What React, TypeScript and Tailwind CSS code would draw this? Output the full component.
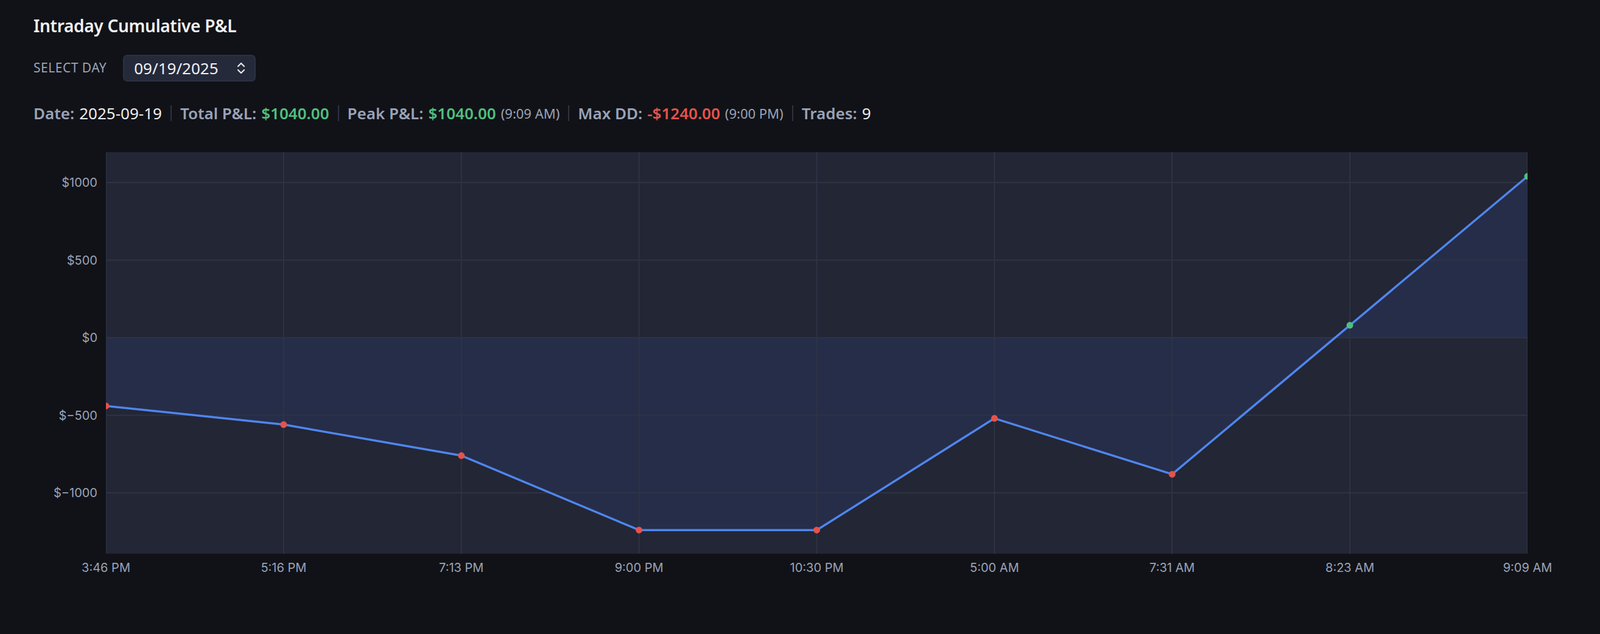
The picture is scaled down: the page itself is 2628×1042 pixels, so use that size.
const pts = [
  { t: "3:46 PM", v: -440 },
  { t: "5:16 PM", v: -560 },
  { t: "7:13 PM", v: -760 },
  { t: "9:00 PM", v: -1240 },
  { t: "10:30 PM", v: -1240 },
  { t: "5:00 AM", v: -520 },
  { t: "7:31 AM", v: -880 },
  { t: "8:23 AM", v: 80 },
  { t: "9:09 AM", v: 1040 },
];

// svg coordinates: svg top sits at page y=220
const L = 174;
const R = 2509;
const T = 30;
const B = 690;
const zeroY = 335;
const perUnit = 127.5 / 500;
const X = (i: number) => L + ((R - L) * i) / (pts.length - 1);
const Y = (v: number) => zeroY - v * perUnit;

function Chart() {
  const line = pts.map((p, i) => `${i ? "L" : "M"}${X(i)},${Y(p.v)}`).join(" ");
  const area = `${line} L${X(pts.length - 1)},${zeroY} L${X(0)},${zeroY} Z`;
  const ticks = [1000, 500, 0, -500, -1000];
  return (
    <svg width={2628} height={730} className="block">
      <defs>
        <clipPath id="plot">
          <rect x={L} y={T} width={R - L} height={B - T} />
        </clipPath>
      </defs>
      <rect x={L} y={T} width={R - L} height={B - T} fill="#232634" />
      <g clipPath="url(#plot)">
        <path d={area} fill="#283050" opacity={0.75} />
        {ticks.map((v) => (
          <line key={v} x1={L} x2={R} y1={Y(v)} y2={Y(v)} stroke="#2f3345" strokeWidth={2} />
        ))}
        {pts.map((_, i) => (
          <line key={i} x1={X(i)} x2={X(i)} y1={T} y2={B} stroke="#2f3345" strokeWidth={2} />
        ))}
        <path d={line} fill="none" stroke="#4f86ee" strokeWidth={3.5} strokeLinejoin="round" />
        {pts.map((p, i) => (
          <circle key={i} cx={X(i)} cy={Y(p.v)} r={5.5} fill={p.v >= 0 ? "#4fbf7f" : "#e5534b"} />
        ))}
      </g>
      {ticks.map((v) => (
        <text key={v} x={L - 14} y={Y(v) + 7} textAnchor="end" fontSize={20} fill="#9aa3b8" fontFamily="Inter, sans-serif">
          {v < 0 ? `$−${-v}` : `$${v}`}
        </text>
      ))}
      {pts.map((p, i) => (
        <text key={i} x={X(i)} y={B + 30} textAnchor="middle" fontSize={20} fill="#9aa3b8" fontFamily="Inter, sans-serif">
          {p.t}
        </text>
      ))}
    </svg>
  );
}

function Sep() {
  return <span className="mx-[14px] inline-block h-[26px] w-[2px] bg-[#2e3240] align-middle" />;
}

export default function App() {
  return (
    <div className="min-h-[1042px] w-[2628px] bg-[#111217] font-['Inter',sans-serif] text-[#e8e8ea]">
      <div className="px-[55px] pt-[26px]">
        <h1 className="text-[28px] leading-[32px] font-semibold tracking-[-0.3px] text-[#f2f2f4]">Intraday Cumulative P&amp;L</h1>
        <div className="mt-[32px] flex h-[44px] items-center gap-[27px]">
          <span className="text-[21px] tracking-[0.5px] text-[#9aa3b8]">SELECT DAY</span>
          <div className="flex h-[44px] w-[218px] items-center justify-between rounded-[7px] border-2 border-[#2c3142] bg-[#252a3a] pl-[16px] pr-[14px]">
            <span className="text-[26px] text-[#f0f0f2]">09/19/2025</span>
            <svg width="16" height="24" viewBox="0 0 16 24" fill="none" stroke="#e8e8ea" strokeWidth="2.2" strokeLinecap="round" strokeLinejoin="round">
              <path d="M3 9l5-5 5 5M3 15l5 5 5-5" />
            </svg>
          </div>
        </div>
        <div className="mt-[36px] flex h-[32px] items-center text-[26px] leading-[32px] whitespace-nowrap">
          <span className="font-semibold text-[#9aa3b8]">Date:</span>
          <span className="ml-[8px] text-[#ededef]">2025-09-19</span>
          <Sep />
          <span className="font-semibold text-[#9aa3b8]">Total P&amp;L:</span>
          <span className="ml-[8px] font-semibold text-[#4fbf7f]">$1040.00</span>
          <Sep />
          <span className="font-semibold text-[#9aa3b8]">Peak P&amp;L:</span>
          <span className="ml-[8px] font-semibold text-[#4fbf7f]">$1040.00</span>
          <span className="ml-[8px] text-[22px] text-[#9aa3b8]">(9:09 AM)</span>
          <Sep />
          <span className="font-semibold text-[#9aa3b8]">Max DD:</span>
          <span className="ml-[8px] font-semibold text-[#e5534b]">-$1240.00</span>
          <span className="ml-[8px] text-[22px] text-[#9aa3b8]">(9:00 PM)</span>
          <Sep />
          <span className="font-semibold text-[#9aa3b8]">Trades:</span>
          <span className="ml-[8px] text-[#ededef]">9</span>
        </div>
      </div>
      <div className="mt-[18px]">
        <Chart />
      </div>
    </div>
  );
}
